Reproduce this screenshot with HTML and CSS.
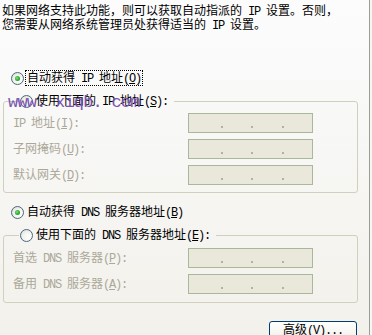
FILE: index.html
```html
<!DOCTYPE html>
<html lang="zh-CN">
<head>
<meta charset="utf-8">
<title>TCP/IP 属性</title>
<link rel="stylesheet" href="styles.css">
</head>
<body>
<div class="page">
  <p class="intro">如果网络支持此功能，则可以获取自动指派的<span class="en"> IP </span>设置。否则，<br>您需要从网络系统管理员处获得适当的<span class="en"> IP </span>设置。</p>

  <div class="opt opt-first"><span class="radio checked"></span><span class="lbl focus">自动获得<span class="en"> IP </span>地址<span class="en">(<u>O</u>)</span></span></div>

  <fieldset class="group group-ip">
    <legend class="legend"><span class="radio"></span><span class="lbl">使用下面的<span class="en"> IP </span>地址<span class="en">(<u>S</u>):</span></span></legend>
    <div class="row"><span class="field-label"><span class="en">IP </span>地址<span class="en">(<u>I</u>):</span></span><span class="ip"><span class="seg"></span><span class="dot"></span><span class="seg"></span><span class="dot"></span><span class="seg"></span><span class="dot"></span><span class="seg"></span></span></div>
    <div class="row"><span class="field-label">子网掩码<span class="en">(<u>U</u>):</span></span><span class="ip"><span class="seg"></span><span class="dot"></span><span class="seg"></span><span class="dot"></span><span class="seg"></span><span class="dot"></span><span class="seg"></span></span></div>
    <div class="row"><span class="field-label">默认网关<span class="en">(<u>D</u>):</span></span><span class="ip"><span class="seg"></span><span class="dot"></span><span class="seg"></span><span class="dot"></span><span class="seg"></span><span class="dot"></span><span class="seg"></span></span></div>
  </fieldset>

  <div class="opt opt-dns"><span class="radio checked"></span><span class="lbl">自动获得<span class="en"> DNS </span>服务器地址<span class="en">(<u>B</u>)</span></span></div>

  <fieldset class="group group-dns">
    <legend class="legend"><span class="radio"></span><span class="lbl">使用下面的<span class="en"> DNS </span>服务器地址<span class="en">(<u>E</u>):</span></span></legend>
    <div class="row"><span class="field-label">首选<span class="en"> DNS </span>服务器<span class="en">(<u>P</u>):</span></span><span class="ip"><span class="seg"></span><span class="dot"></span><span class="seg"></span><span class="dot"></span><span class="seg"></span><span class="dot"></span><span class="seg"></span></span></div>
    <div class="row"><span class="field-label">备用<span class="en"> DNS </span>服务器<span class="en">(<u>A</u>):</span></span><span class="ip"><span class="seg"></span><span class="dot"></span><span class="seg"></span><span class="dot"></span><span class="seg"></span><span class="dot"></span><span class="seg"></span></span></div>
  </fieldset>

  <div class="actions"><button class="btn" type="button">高级<span class="en">(<u>V</u>)...</span></button></div>

  <div class="watermark">www. xiqb. com</div>
</div>
</body>
</html>
```

FILE: styles.css
```css
html, body {
  margin: 0;
  padding: 0;
}

body {
  width: 372px;
  height: 335px;
  overflow: hidden;
  background: #f6f6f3;
  font-family: "Noto Sans CJK SC", "Noto Sans", sans-serif;
  font-size: 12px;
  color: #000;
}

.page {
  position: relative;
  width: 369px;
  height: 335px;
  border-right: 1px solid #9d9d98;
  background: linear-gradient(#fcfcfd, #f2f1eb);
}

.intro {
  margin: 0;
  padding: 4px 0 0 2px;
  line-height: 12px;
  white-space: nowrap;
}

.en {
  font-family: "Liberation Mono", monospace;
  font-size: 12px;
  letter-spacing: -1.2px;
}

.opt {
  display: flex;
  align-items: center;
  height: 14px;
  padding-left: 11px;
  white-space: nowrap;
}

.opt-first {
  margin-top: 39px;
}

.opt-dns {
  margin-top: 12px;
}

.radio {
  flex: none;
  display: flex;
  align-items: center;
  justify-content: center;
  width: 13px;
  height: 13px;
  box-sizing: border-box;
  border: 1px solid #4a6782;
  border-radius: 50%;
  background: radial-gradient(circle at 65% 65%, #ffffff 0, #f4f4f0 45%, #d9d9d2 100%);
}

.radio.checked::after {
  content: "";
  width: 5px;
  height: 5px;
  border-radius: 50%;
  background: radial-gradient(circle at 40% 40%, #7ee07e 0, #2aab2a 55%, #1b851b 100%);
}

.lbl {
  margin-left: 1px;
  padding: 0 1px;
  line-height: 12px;
  border: 1px solid transparent;
}

.lbl.focus {
  border: 1px dotted #000;
}

.group {
  margin: 9px 0 0 3px;
  width: 355px;
  min-width: 0;
  box-sizing: border-box;
  border: 1px solid #d0d0bf;
  border-radius: 3px;
  padding: 5px 0 7px 9px;
}

.group-dns {
  padding: 6px 0 8px 9px;
}

.legend {
  display: flex;
  align-items: center;
  height: 14px;
  margin-left: 6px;
  padding: 0 4px 0 1px;
  white-space: nowrap;
}

.row {
  display: flex;
  align-items: center;
  height: 20px;
}

.row + .row {
  margin-top: 6px;
}

.field-label {
  width: 175px;
  flex: none;
  color: #aca899;
  white-space: nowrap;
  line-height: 12px;
}

.ip {
  display: flex;
  width: 125px;
  height: 20px;
  box-sizing: border-box;
  border: 1px solid #a9b89c;
  background: #e9e8da;
  padding-left: 3px;
}

.seg {
  width: 29px;
}

.dot {
  width: 2px;
  height: 2px;
  align-self: flex-end;
  margin-bottom: 4px;
  background: #b3b1a2;
}

.actions {
  display: flex;
  justify-content: flex-end;
  width: 357px;
  margin-top: 18px;
}

.btn {
  width: 88px;
  height: 23px;
  box-sizing: border-box;
  border: 1px solid #003c74;
  border-radius: 3px;
  background: linear-gradient(#ffffff, #f5f5f1 55%, #e4e2d7);
  font-family: "Noto Sans CJK SC", "Noto Sans", sans-serif;
  font-size: 12px;
  line-height: 12px;
  color: #000;
  padding: 0 0 6px;
  white-space: nowrap;
}

.watermark {
  position: absolute;
  left: 8px;
  top: 94px;
  font-family: "Liberation Mono", monospace;
  font-size: 17px;
  line-height: 17px;
  letter-spacing: -0.8px;
  color: #7a55b0;
  white-space: pre;
}
```
